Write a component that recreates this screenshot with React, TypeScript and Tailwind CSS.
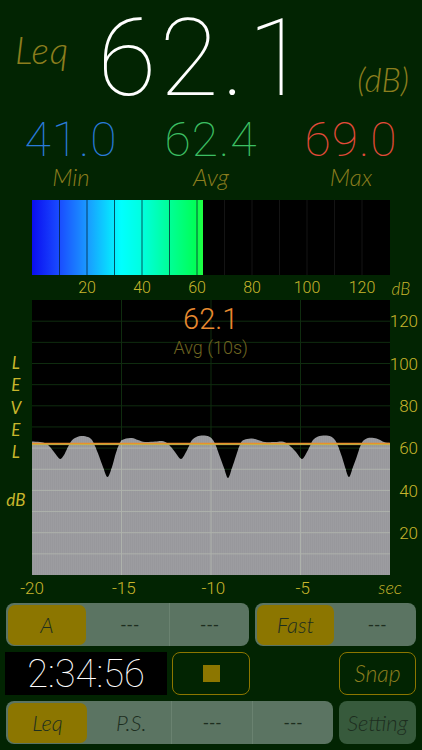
import React from "react";

const gold = "#8c7e1e";
const axis = "#c8b62c";

const pts: [number, number][] = [
  [32, 441.5], [40, 442], [46, 443.5], [50, 447], [54, 452], [57, 456], [60.5, 459], [64, 455], [67, 449], [70, 443], [74, 438.5], [81, 436], [88, 437], [92, 440],
  [95, 446], [99, 456], [103, 467], [107.5, 477], [112, 467], [115, 456], [118, 447], [121, 441], [126, 438.5], [132, 438], [138, 440], [145, 442],
  [155, 441.5], [162, 441], [167, 443], [171, 447], [175, 452], [181, 459], [186, 452], [189, 446], [192, 440], [197, 436.5], [203, 435.5], [209, 436.5],
  [213, 440], [216, 446], [220, 457], [224, 468], [228, 478], [232, 468], [236, 456], [239, 447], [242, 441], [247, 439], [252, 438.5], [258, 440],
  [265, 442], [275, 442], [282, 441.5], [287, 443.5], [291, 447], [296, 452], [302, 459], [307, 452], [310, 446], [313, 440], [318, 436.5], [325, 435.5],
  [331, 436.5], [335, 440], [338, 446], [342, 457], [345, 467], [349, 477], [353, 467], [357, 456], [360, 447], [363, 441], [368, 438], [374, 438],
  [379, 439.5], [384, 442], [390, 443],
];

function wavePath(): string {
  const p = pts.map(([x, y]) => [x - 32, y - 300]);
  let d = `M0,275 L${p[0][0]},${p[0][1]}`;
  for (let i = 0; i < p.length - 1; i++) {
    const p0 = p[i - 1] || p[i];
    const p1 = p[i];
    const p2 = p[i + 1];
    const p3 = p[i + 2] || p2;
    const c1x = p1[0] + (p2[0] - p0[0]) / 6;
    const c1y = p1[1] + (p2[1] - p0[1]) / 6;
    const c2x = p2[0] - (p3[0] - p1[0]) / 6;
    const c2y = p2[1] - (p3[1] - p1[1]) / 6;
    d += ` C${c1x.toFixed(2)},${c1y.toFixed(2)} ${c2x.toFixed(2)},${c2y.toFixed(2)} ${p2[0]},${p2[1]}`;
  }
  d += " L358,275 Z";
  return d;
}

function Meter() {
  const lines = Array.from({ length: 12 }, (_, i) => 27.5 * (i + 1));
  return (
    <svg width="358" height="75" viewBox="0 0 358 75" className="block">
      <defs>
        <linearGradient id="mg" x1="0" x2="171" y1="0" y2="0" gradientUnits="userSpaceOnUse">
          <stop offset="0" stopColor="#0a0ef0" />
          <stop offset="0.16" stopColor="#1a4cff" />
          <stop offset="0.32" stopColor="#1a98ff" />
          <stop offset="0.47" stopColor="#06e6ff" />
          <stop offset="0.52" stopColor="#00ffff" />
          <stop offset="0.64" stopColor="#00ffe0" />
          <stop offset="0.8" stopColor="#00ff98" />
          <stop offset="0.95" stopColor="#00ff5a" />
          <stop offset="1" stopColor="#20ff40" />
        </linearGradient>
      </defs>
      <rect x="0" y="0" width="358" height="75" fill="#000" />
      <rect x="0" y="0" width="171" height="75" fill="url(#mg)" />
      {lines.map((x) => (
        <line key={x} x1={x} x2={x} y1="0" y2="75" stroke={x < 171 ? "rgba(0,30,50,0.75)" : "#141414"} strokeWidth="1" />
      ))}
    </svg>
  );
}

function Chart() {
  const h = Array.from({ length: 12 }, (_, i) => 275 - 21.15 * (i + 1));
  const v = [89.5, 179, 268.5];
  const d = wavePath();
  return (
    <div className="relative w-[358px] h-[275px]">
      <svg width="358" height="275" viewBox="0 0 358 275" className="block">
        <defs>
          <clipPath id="wc">
            <path d={d} />
          </clipPath>
          <pattern id="stripes" width="2" height="4" patternUnits="userSpaceOnUse">
            <rect width="2" height="4" fill="#9c9ca0" />
            <rect width="1" height="4" fill="#98989c" />
          </pattern>
        </defs>
        <rect width="358" height="275" fill="#000" />
        {h.map((y) => (
          <line key={"h" + y} x1="0" x2="358" y1={y} y2={y} stroke="#0f2c0f" strokeWidth="1" />
        ))}
        {v.map((x) => (
          <line key={"v" + x} x1={x} x2={x} y1="0" y2="275" stroke="#0f2c0f" strokeWidth="1" />
        ))}
        <path d={d} fill="url(#stripes)" />
        <g clipPath="url(#wc)">
          {h.map((y) => (
            <line key={"hh" + y} x1="0" x2="358" y1={y} y2={y} stroke="#aeb2ac" strokeWidth="1" />
          ))}
          {v.map((x) => (
            <line key={"vv" + x} x1={x} x2={x} y1="0" y2="275" stroke="#aeb2ac" strokeWidth="1" />
          ))}
        </g>
        <line x1="0" x2="358" y1="144.6" y2="144.6" stroke="#b8c04a" strokeWidth="1" />
        <line x1="0" x2="358" y1="143.4" y2="143.4" stroke="#e8902c" strokeWidth="1.5" />
      </svg>
      <div className="absolute left-0 right-0 top-[3px] flex flex-col items-center">
        <div className="text-[29px] leading-[32px] font-light text-[#e88a30] font-['Roboto',sans-serif]">62.1</div>
        <div className="mt-[3px] text-[18px] leading-[20px] font-light text-[#6e6420] font-['Roboto',sans-serif]">Avg (10s)</div>
      </div>
    </div>
  );
}

function Seg({ children, sel, italic = true, divider = false, small = false }: { children: React.ReactNode; sel?: boolean; italic?: boolean; divider?: boolean; small?: boolean }) {
  return (
    <div className={"flex-1 flex items-center justify-center " + (divider ? "border-l border-[#6a8270] " : "") + (sel ? "bg-[#8c7600] rounded-[7px] m-[1.5px] mr-[4px] " : "")}>
      <span className={(small ? "text-[17px] font-normal " : "text-[22px] font-light ") + (italic ? "italic " : "") + "text-[#1d2e1f] leading-none"}>{children}</span>
    </div>
  );
}

export default function App() {
  const ticks = [20, 40, 60, 80, 100, 120];
  const right = [120, 100, 80, 60, 40, 20];
  return (
    <div className="w-[422px] h-[750px] overflow-hidden bg-[#022402] flex flex-col font-['Lato',sans-serif]">
      {/* Top */}
      <div className="flex h-[108px]">
        <div className="pl-[15px] pt-[31px] text-[37px] leading-none italic font-light tracking-[1px]" style={{ color: gold }}>Leq</div>
        <div className="ml-[28px] pt-[8px] text-[108px] leading-[100px] font-thin text-white font-['Roboto',sans-serif] tracking-[3px]">62.1</div>
        <div className="ml-auto pr-[13px] pt-[63px] text-[33px] leading-none italic font-light" style={{ color: gold }}>(dB)</div>
      </div>
      {/* Stats */}
      <div className="grid grid-cols-3 h-[92px] px-[1px]">
        {[
          ["41.0", "Min", "#2a7bd9"],
          ["62.4", "Avg", "#3cbf62"],
          ["69.0", "Max", "#e24b3a"],
        ].map(([n, l, c]) => (
          <div key={l} className="flex flex-col items-center">
            <div className="pt-[10px] text-[48px] leading-[44px] font-thin font-['Roboto',sans-serif] tracking-[1px]" style={{ color: c }}>{n}</div>
            <div className="mt-[3px] text-[24px] leading-[24px] italic font-light" style={{ color: gold }}>{l}</div>
          </div>
        ))}
      </div>
      {/* Meter */}
      <div className="pl-[32px]">
        <Meter />
      </div>
      <div className="h-[25px] text-[16px] leading-none font-light font-['Roboto',sans-serif]" style={{ color: axis }}>
        <div className="flex pl-[32px] pt-[5px]">
          <div className="w-[27.5px]" />
          {ticks.map((t) => (
            <div key={t} className="w-[55px] text-center">{t}</div>
          ))}
          <div className="pl-[2px] italic font-['Lato',sans-serif] text-[17px]">dB</div>
        </div>
      </div>
      {/* Chart */}
      <div className="flex h-[275px]">
        <div className="w-[32px] flex flex-col items-center pt-[52px] italic text-[17px] leading-[22.3px]" style={{ color: axis }}>
          <span>L</span>
          <span>E</span>
          <span>V</span>
          <span>E</span>
          <span>L</span>
          <span className="mt-[26px]">dB</span>
        </div>
        <Chart />
        <div className="flex-1 flex flex-col pt-[1px] pr-[4px] text-[17px] font-light font-['Roboto',sans-serif]" style={{ color: axis }}>
          {right.map((r) => (
            <div key={r} className="h-[42.3px] flex items-center justify-end">{r}</div>
          ))}
        </div>
      </div>
      {/* X axis */}
      <div className="flex h-[28px] text-[17px] leading-none font-light font-['Roboto',sans-serif] pt-[5px]" style={{ color: axis }}>
        <div className="w-[64px] text-center">-20</div>
        <div className="w-[89.5px] text-center translate-x-[15px]">-15</div>
        <div className="w-[89.5px] text-center translate-x-[15px]">-10</div>
        <div className="w-[89.5px] text-center translate-x-[15px]">-5</div>
        <div className="ml-auto pr-[20px] italic font-['Lato',sans-serif] text-[18px] -mt-[2px]">sec</div>
      </div>
      {/* Row 1 */}
      <div className="flex px-[6px] h-[43px]">
        <div className="w-[243px] rounded-[8px] bg-[#5b7462] flex">
          <Seg sel>A</Seg>
          <Seg small italic={false}>---</Seg>
          <Seg small italic={false} divider>---</Seg>
        </div>
        <div className="ml-auto w-[161px] rounded-[8px] bg-[#5b7462] flex">
          <Seg sel>Fast</Seg>
          <Seg small italic={false}>---</Seg>
        </div>
      </div>
      {/* Row 2 */}
      <div className="flex h-[43px] mt-[6px] pl-[5px] pr-[6px]">
        <div className="w-[162px] bg-black flex items-center justify-center text-white text-[38px] leading-none font-thin font-['Roboto',sans-serif]">2:34:56</div>
        <div className="ml-[5px] w-[78px] rounded-[8px] border border-[#8c7600] flex items-center justify-center">
          <div className="w-[17px] h-[17px] bg-[#8c7600]" />
        </div>
        <div className="ml-auto w-[77px] rounded-[8px] border border-[#8c7600] flex items-center justify-center italic font-light text-[23px] leading-none" style={{ color: gold }}>Snap</div>
      </div>
      {/* Row 3 */}
      <div className="flex h-[43px] mt-[6px] px-[6px]">
        <div className="w-[327px] rounded-[8px] bg-[#5b7462] flex">
          <Seg sel>Leq</Seg>
          <Seg>P.S.</Seg>
          <Seg small italic={false} divider>---</Seg>
          <Seg small italic={false} divider>---</Seg>
        </div>
        <div className="ml-auto w-[77px] rounded-[8px] bg-[#375a3c] flex items-center justify-center italic font-light text-[22px] leading-none text-[#1d2e1f]">Setting</div>
      </div>
    </div>
  );
}
